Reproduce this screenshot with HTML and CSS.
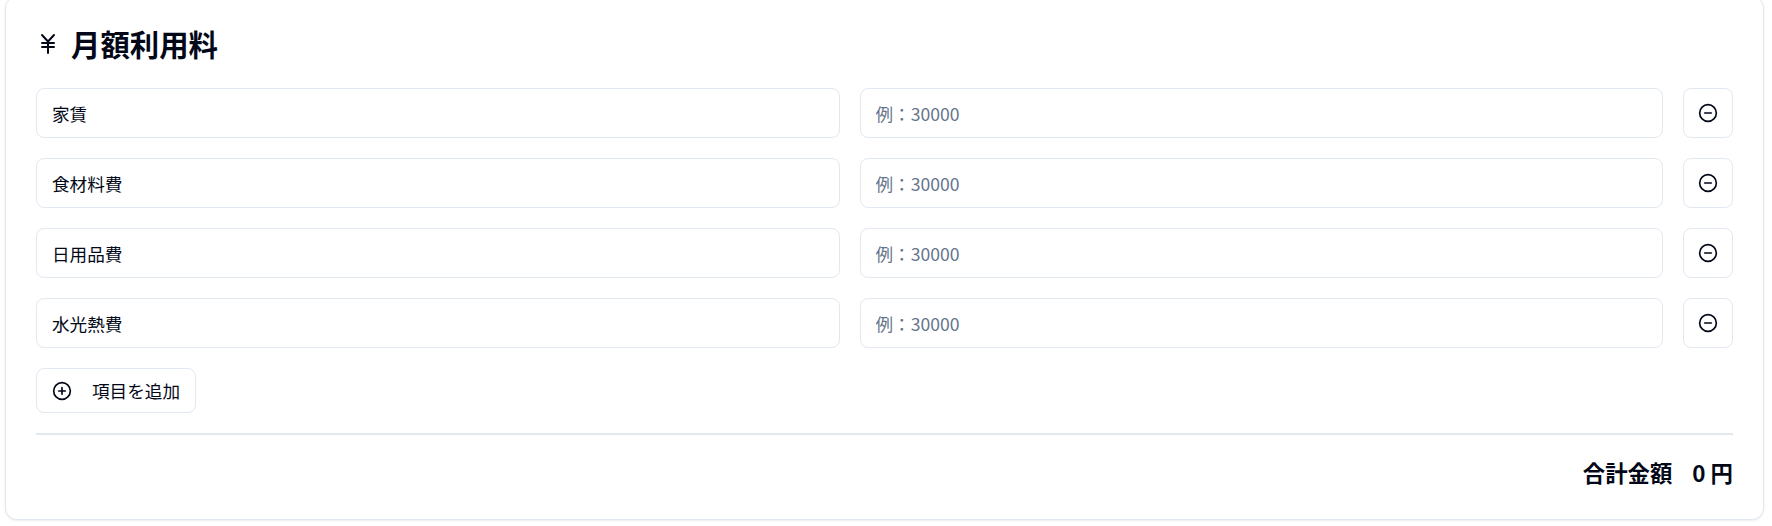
FILE: index.html
```html
<!DOCTYPE html>
<html lang="ja">
<head>
<meta charset="utf-8">
<title>月額利用料</title>
<link rel="stylesheet" href="styles.css">
</head>
<body>
<section class="card">
  <h2 class="title">
    <svg class="icon title-icon" viewBox="0 0 24 24"><path d="M12 9.5V21m0-11.5L6 3m6 6.5L18 3"/><path d="M6 15h12"/><path d="M6 11h12"/></svg>
    <span>月額利用料</span>
  </h2>
  <div class="rows">
    <div class="row">
      <input class="field" type="text" value="家賃">
      <input class="field" type="text" placeholder="例：30000">
      <button class="square" type="button"><svg class="icon small" viewBox="0 0 24 24"><circle cx="12" cy="12" r="10"/><path d="M8 12h8"/></svg></button>
    </div>
    <div class="row">
      <input class="field" type="text" value="食材料費">
      <input class="field" type="text" placeholder="例：30000">
      <button class="square" type="button"><svg class="icon small" viewBox="0 0 24 24"><circle cx="12" cy="12" r="10"/><path d="M8 12h8"/></svg></button>
    </div>
    <div class="row">
      <input class="field" type="text" value="日用品費">
      <input class="field" type="text" placeholder="例：30000">
      <button class="square" type="button"><svg class="icon small" viewBox="0 0 24 24"><circle cx="12" cy="12" r="10"/><path d="M8 12h8"/></svg></button>
    </div>
    <div class="row">
      <input class="field" type="text" value="水光熱費">
      <input class="field" type="text" placeholder="例：30000">
      <button class="square" type="button"><svg class="icon small" viewBox="0 0 24 24"><circle cx="12" cy="12" r="10"/><path d="M8 12h8"/></svg></button>
    </div>
  </div>
  <button class="add" type="button"><svg class="icon small" viewBox="0 0 24 24"><circle cx="12" cy="12" r="10"/><path d="M8 12h8"/><path d="M12 8v8"/></svg><span>項目を追加</span></button>
  <div class="total"><span>合計金額</span><span>0 円</span></div>
</section>
</body>
</html>
```
FILE: styles.css
```css
* { box-sizing: border-box; }
html, body { margin: 0; padding: 0; background: #fff; }
html { overflow: hidden; }
body {
  font-family: "Noto Sans CJK JP", "Noto Sans", sans-serif;
  color: #020817;
  height: 526px;
  overflow: hidden;
}
.card {
  margin: -4px 8px 0 5px;
  height: 524px;
  padding: 26px 30px 0;
  background: #fff;
  border: 1px solid #e2e8f0;
  border-radius: 12px;
  box-shadow: 0 1px 3px rgba(0, 0, 0, 0.05), 0 1px 2px rgba(0, 0, 0, 0.03);
}
.title {
  display: flex;
  align-items: center;
  gap: 11px;
  height: 40px;
  margin: 0 0 25px;
  font-size: 29.4px;
  line-height: 40px;
  font-weight: 700;
}
.icon {
  width: 24px;
  height: 24px;
  flex: none;
  fill: none;
  stroke: currentColor;
  stroke-width: 2;
  stroke-linecap: round;
  stroke-linejoin: round;
}
.title-icon { margin-top: 2px; }
.icon.small { width: 20px; height: 20px; }
.rows { display: flex; flex-direction: column; gap: 20px; }
.row { display: flex; gap: 20px; }
.field {
  flex: 1;
  min-width: 0;
  height: 50px;
  padding: 0 15px;
  font: inherit;
  font-size: 17.6px;
  color: inherit;
  background: #fff;
  border: 1px solid #e2e8f0;
  border-radius: 8px;
}
.field::placeholder { color: #64748b; opacity: 1; }
.square, .add {
  display: flex;
  align-items: center;
  justify-content: center;
  background: #fff;
  color: inherit;
  font: inherit;
  border: 1px solid #e2e8f0;
  border-radius: 8px;
  padding: 0;
}
.square { flex: none; width: 50px; height: 50px; }
.add {
  gap: 20px;
  width: 160px;
  height: 45px;
  margin-top: 20px;
  font-size: 17.6px;
}
.total {
  display: flex;
  justify-content: flex-end;
  gap: 20px;
  margin-top: 20px;
  padding-top: 19px;
  border-top: 2px solid #e2e8f0;
  font-size: 22.4px;
  line-height: 36px;
  font-weight: 700;
}
```
